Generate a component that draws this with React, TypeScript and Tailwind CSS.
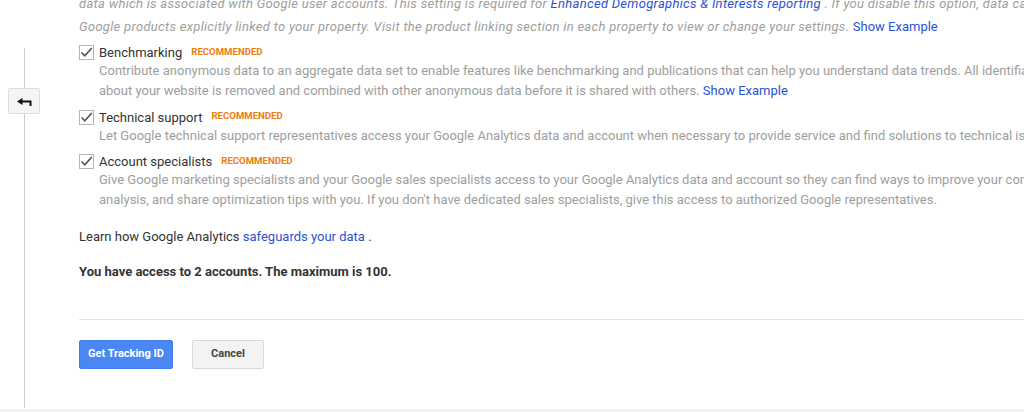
import React from "react";

const link = "text-[#2b52d4]";

const Check: React.FC = () => (
  <svg width="15" height="15" viewBox="0 0 15 15" className="shrink-0">
    <rect x="0.5" y="0.5" width="14" height="14" fill="#fff" stroke="#b5b5b5" />
    <path d="M2.5 7.5 L5.8 10.8 L12.8 3" fill="none" stroke="#555" strokeWidth="1.7" />
  </svg>
);

interface OptionProps {
  title: string;
  lines: React.ReactNode[];
  first?: boolean;
}

const Option: React.FC<OptionProps> = ({ title, lines, first }) => (
  <div className={first ? "mt-[7.5px]" : "mt-[8.5px]"}>
    <div className="flex items-center h-[16px]">
      <div className="w-[20px] -mt-[1px]">
        <Check />
      </div>
      <span className="text-[13px] text-[#333]">{title}</span>
      <span className="ml-[9px] -mt-[2px] text-[9.6px] font-bold text-[#f07c0c]">
        RECOMMENDED
      </span>
    </div>
    <div className="pl-[20px] text-[13px] leading-[20px] text-[#9e9e9e]">
      {lines.map((l, i) => (
        <div key={i} className="whitespace-nowrap">
          {l}
        </div>
      ))}
    </div>
  </div>
);

export default function App() {
  return (
    <div className="h-[412px] w-[1024px] overflow-hidden bg-white font-['Roboto','Liberation_Sans',sans-serif]">
      <div className="flex h-[409px]">
        <div className="relative w-[79px] shrink-0">
          <div className="absolute left-[24px] top-[48px] bottom-[1px] w-px bg-[#cfcfcf]" />
          <button className="absolute left-[8px] top-[88px] flex h-[26px] w-[32px] items-center justify-center rounded-[2px] border border-[#dcdcdc] bg-[#f5f5f5]">
            <svg width="15" height="8" viewBox="0 0 15 8" className="mt-[2px]">
              <path d="M0 3.5 L5.5 0 L5.5 2.5 L14.5 2.5 L14.5 8 L12.5 8 L12.5 4.5 L5.5 4.5 L5.5 7 Z" fill="#111" />
            </svg>
          </button>
        </div>
        <div className="w-[1200px] shrink-0">
          <div className="-mt-[8.5px] text-[13px] leading-[23px] italic tracking-[0.3px] text-[#9e9e9e]">
            <div className="whitespace-nowrap">
              data which is associated with Google user accounts. This setting is required for{" "}
              <span className={link}>Enhanced Demographics &amp; Interests reporting</span> . If you
              disable this option, data can still flow to other
            </div>
            <div className="whitespace-nowrap">
              Google products explicitly linked to your property. Visit the product linking section in
              each property to view or change your settings.{" "}
              <span className={`${link} not-italic tracking-normal`}>Show Example</span>
            </div>
          </div>

          <Option
            first
            title="Benchmarking"
            lines={[
              "Contribute anonymous data to an aggregate data set to enable features like benchmarking and publications that can help you understand data trends. All identifiable information",
              <>
                about your website is removed and combined with other anonymous data before it is shared
                with others. <span className={link}>Show Example</span>
              </>,
            ]}
          />
          <Option
            title="Technical support"
            lines={[
              "Let Google technical support representatives access your Google Analytics data and account when necessary to provide service and find solutions to technical issues.",
            ]}
          />
          <Option
            title="Account specialists"
            lines={[
              "Give Google marketing specialists and your Google sales specialists access to your Google Analytics data and account so they can find ways to improve your configuration and",
              "analysis, and share optimization tips with you. If you don't have dedicated sales specialists, give this access to authorized Google representatives.",
            ]}
          />

          <p className="mt-[17px] text-[13px] leading-[20px] text-[#333]">
            Learn how Google Analytics <span className={link}>safeguards your data</span> .
          </p>
          <p className="mt-[15px] text-[13px] leading-[20px] font-bold text-[#333]">
            You have access to 2 accounts. The maximum is 100.
          </p>

          <div className="mt-[37px] h-px bg-[#e2e2e2]" />

          <div className="mt-[20px] flex gap-[19px]">
            <button className="h-[29px] w-[94px] rounded-[2px] border border-[#3f7ff0] bg-[#4a87f5] text-[11px] font-bold text-white">
              Get Tracking ID
            </button>
            <button className="h-[29px] w-[72px] rounded-[2px] border border-[#d9d9d9] bg-[#f3f3f3] text-[11px] font-bold text-[#444]">
              Cancel
            </button>
          </div>
        </div>
      </div>
      <div className="h-[3px] bg-[#f3f3f3]" />
    </div>
  );
}
